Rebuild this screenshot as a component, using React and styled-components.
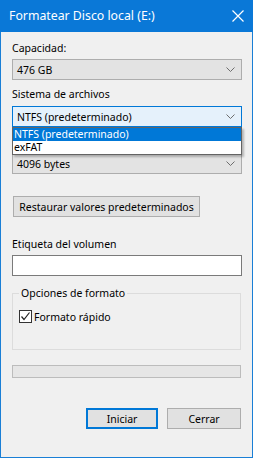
import React, { useState } from "react";
import styled, { createGlobalStyle } from "styled-components";

const GlobalStyle = createGlobalStyle`
  html, body {
    margin: 0;
    padding: 0;
    background: #ffffff;
  }
  body {
    font-family: "Noto Sans", "Liberation Sans", sans-serif;
    font-size: 10.5px;
    color: #000;
  }
`;

const Window = styled.div`
  width: 253px;
  height: 458px;
  box-sizing: border-box;
  border: 1px solid #1a7fd6;
  border-top: none;
  background: #f0f0f0;
  display: flex;
  flex-direction: column;
`;

const TitleBar = styled.div`
  height: 32px;
  margin: 0 -1px;
  background: #0a78d7;
  color: #fff;
  display: flex;
  align-items: center;
  justify-content: space-between;
  padding: 0 9px 1px 9px;
  box-sizing: border-box;
  font-size: 12.3px;
`;

const Body = styled.div`
  position: relative;
  flex: 1;
  display: flex;
  flex-direction: column;
  padding: 0 10px 0 11px;
`;

const Label = styled.div`
  height: 15px;
  line-height: 15px;
  white-space: nowrap;
  margin-top: ${(p) => p.$top}px;
  margin-bottom: ${(p) => p.$bottom ?? 3}px;
`;

const Combo = styled.div`
  position: relative;
  height: 21px;
  box-sizing: border-box;
  border: 1px solid ${(p) => (p.$focused ? "#0078d7" : "#adadad")};
  background: ${(p) => (p.$focused ? "#e5f1fb" : "#e3e3e3")};
  display: flex;
  align-items: center;
  justify-content: space-between;
  padding: 0 6px 0 4px;
`;

const DropList = styled.div`
  position: absolute;
  left: 11px;
  right: 10px;
  top: 95px;
  background: #fff;
  border: 1px solid #646464;
  box-shadow: 2px 2px 2px rgba(0, 0, 0, 0.25);
  z-index: 2;
`;

const Option = styled.div`
  height: 13px;
  line-height: 13px;
  padding: 0 1px;
  background: ${(p) => (p.$active ? "#0078d7" : "#fff")};
  color: ${(p) => (p.$active ? "#fff" : "#000")};
`;

const Button = styled.button`
  height: 21px;
  width: ${(p) => p.$width}px;
  box-sizing: border-box;
  margin: 0;
  padding: 0;
  font: inherit;
  white-space: nowrap;
  color: #000;
  background: #e1e1e1;
  border: ${(p) => (p.$default ? "2px solid #0078d7" : "1px solid #adadad")};
`;

const RestoreButton = styled(Button)`
  margin-top: 22px;
  margin-left: 1px;
`;

const TextInput = styled.div`
  height: 21px;
  box-sizing: border-box;
  border: 1px solid #7a7a7a;
  background: #fff;
`;

const Group = styled.fieldset`
  margin: 10px 1px 0 0;
  padding: 4px 6px 0 6px;
  height: 64px;
  box-sizing: border-box;
  border: 1px solid #dcdcdc;
`;

const Legend = styled.legend`
  padding: 0 2px;
  margin-left: 0;
  line-height: 15px;
`;

const CheckRow = styled.label`
  display: flex;
  align-items: center;
  gap: 2px;
  margin-top: 4px;
  height: 15px;
`;

const CheckBox = styled.span`
  width: 13px;
  height: 13px;
  box-sizing: border-box;
  border: 1px solid #333;
  background: #fff;
  display: flex;
  align-items: center;
  justify-content: center;
`;

const Progress = styled.div`
  margin: 15px 1px 0 0;
  height: 13px;
  box-sizing: border-box;
  border: 1px solid #bcbcbc;
  background: #e6e6e6;
`;

const Footer = styled.div`
  margin-top: 30px;
  display: flex;
  justify-content: flex-end;
  gap: 9px;
  padding-right: 1px;
`;

const Chevron = () => (
  <svg width="9" height="5" viewBox="0 0 9 5">
    <path d="M0.5 0.5 L4.5 4.5 L8.5 0.5" fill="none" stroke="#6d6d6d" strokeWidth="1" />
  </svg>
);

const Close = () => (
  <svg width="12" height="12" viewBox="0 0 12 12">
    <path d="M0.5 0.5 L11.5 11.5 M11.5 0.5 L0.5 11.5" stroke="#fff" strokeWidth="1.2" />
  </svg>
);

const App = () => {
  const [quick, setQuick] = useState(true);

  return (
    <Window>
      <GlobalStyle />
      <TitleBar>
        <span>Formatear Disco local (E:)</span>
        <Close />
      </TitleBar>
      <Body>
        <Label $top={9}>Capacidad:</Label>
        <Combo>
          <span>476 GB</span>
          <Chevron />
        </Combo>

        <Label $top={7} $bottom={4}>Sistema de archivos</Label>
        <Combo $focused>
          <span>NTFS (predeterminado)</span>
          <Chevron />
        </Combo>

        {/* label hidden under the open list */}
        <Label $top={7} $bottom={4} />
        <Combo>
          <span>4096 bytes</span>
          <Chevron />
        </Combo>

        <RestoreButton $width={187}>Restaurar valores predeterminados</RestoreButton>

        <Label $top={20}>Etiqueta del volumen</Label>
        <TextInput />

        <Group>
          <Legend>Opciones de formato</Legend>
          <CheckRow onClick={() => setQuick(!quick)}>
            <CheckBox>
              {quick && (
                <svg width="11" height="11" viewBox="0 0 11 11">
                  <path d="M1.5 5.5 L4 8.5 L9.5 1.5" fill="none" stroke="#222" strokeWidth="1.2" />
                </svg>
              )}
            </CheckBox>
            <span>Formato rápido</span>
          </CheckRow>
        </Group>

        <Progress />

        <Footer>
          <Button $width={72} $default>Iniciar</Button>
          <Button $width={74}>Cerrar</Button>
        </Footer>

        <DropList>
          <Option $active>NTFS (predeterminado)</Option>
          <Option>exFAT</Option>
        </DropList>
      </Body>
    </Window>
  );
};

export default App;
